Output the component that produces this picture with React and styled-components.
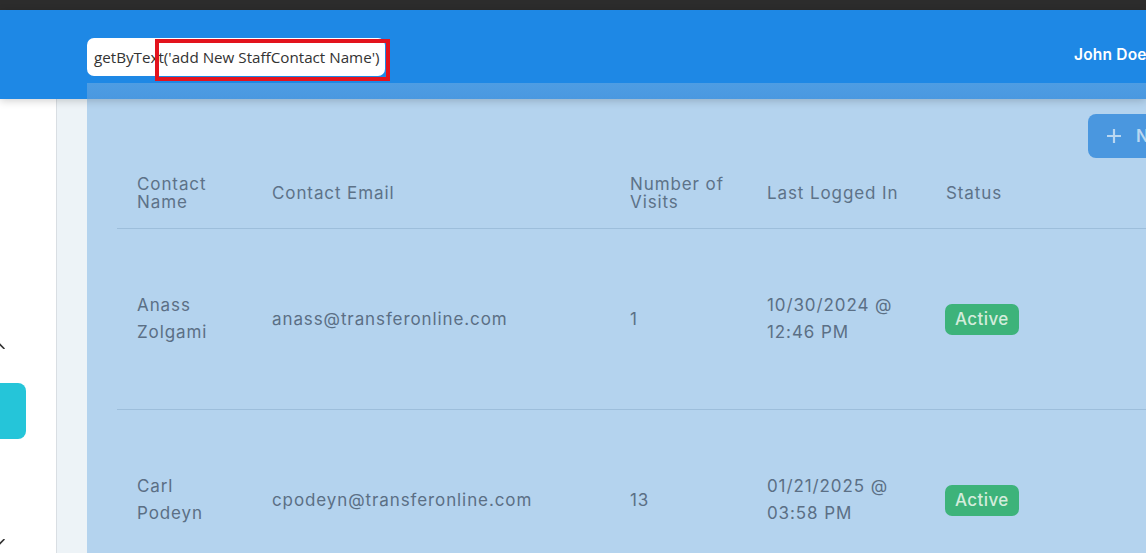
import React from 'react';
import styled, { createGlobalStyle } from 'styled-components';

const GlobalStyle = createGlobalStyle`
  html, body {
    margin: 0;
    padding: 0;
    overflow: hidden;
    background: #ffffff;
  }
  body {
    font-family: Inter, "Noto Sans", sans-serif;
  }
`;

const Page = styled.div`
  position: relative;
  width: 100vw;
  height: 100vh;
  overflow: hidden;
  display: flex;
  flex-direction: column;
`;

const TopStrip = styled.div`
  height: 10px;
  background: #2c2c2c;
  flex-shrink: 0;
`;

const Header = styled.header`
  position: relative;
  z-index: 2;
  height: 89px;
  flex-shrink: 0;
  background: #1e88e5;
  box-shadow: 0 2px 8px rgba(0, 0, 0, 0.18);
  display: grid;
  grid-template-columns: 1fr 72px;
  align-items: center;
`;

const UserName = styled.div`
  color: #ffffff;
  font-family: Inter, sans-serif;
  font-weight: 600;
  font-size: 15.5px;
  letter-spacing: 0.2px;
  white-space: nowrap;
`;

const Body = styled.div`
  flex: 1;
  display: flex;
  min-height: 0;
`;

const Sidebar = styled.aside`
  width: 56px;
  flex-shrink: 0;
  background: #ffffff;
  border-right: 1px solid #d9dee3;
  display: flex;
  flex-direction: column;
  align-items: flex-start;
  padding-top: 242px;
  overflow: hidden;
`;

const Chevron = styled.svg`
  margin-left: -9px;
  margin-top: ${p => p.$gap || 0}px;
  flex-shrink: 0;
`;

const TealButton = styled.div`
  width: 40px;
  height: 56px;
  margin-left: -14px;
  margin-top: 34px;
  border-radius: 8px;
  background: #25c5d9;
`;

const Main = styled.main`
  flex: 1;
  background: #edf3f7;
  padding-left: 30px;
  display: flex;
  min-width: 0;
`;

const Card = styled.section`
  position: relative;
  width: 1200px;
  flex-shrink: 0;
  background: #b4d3ee;
  padding: 15px 30px 0 30px;
  box-sizing: border-box;

  &::before {
    content: '';
    position: absolute;
    left: 0;
    right: 0;
    top: -16px;
    height: 16px;
    z-index: 3;
    background: linear-gradient(#4e9de3, #4a98e0);
  }
`;

const Toolbar = styled.div`
  display: flex;
  justify-content: flex-end;
`;

const NewButton = styled.button`
  height: 44px;
  width: 169px;
  flex-shrink: 0;
  border: none;
  border-radius: 8px;
  background: #4a97df;
  color: #b9d7f1;
  font-family: Inter, sans-serif;
  font-weight: 600;
  font-size: 17px;
  white-space: nowrap;
  display: flex;
  align-items: center;
  gap: 14px;
  padding: 0 0 0 18px;
  box-sizing: border-box;
  overflow: hidden;

  svg {
    flex-shrink: 0;
  }
`;

const Table = styled.table`
  width: 100%;
  border-collapse: collapse;
  table-layout: fixed;
  font-family: Inter, sans-serif;
  letter-spacing: 0.9px;
  color: #5b6f85;
`;

const HeadCell = styled.th`
  text-align: left;
  font-weight: 400;
  font-size: 17px;
  line-height: 18px;
  height: 70px;
  padding: 0 6px 0 20px;
  vertical-align: middle;
  border-bottom: 1px solid #9dbedb;
  color: #5d7288;
`;

const Cell = styled.td`
  font-size: 17px;
  line-height: 27px;
  height: 180px;
  padding: 0 6px 0 20px;
  vertical-align: middle;
  border-bottom: 1px solid #9dbedb;
  white-space: nowrap;
`;

const Badge = styled.span`
  display: inline-block;
  padding: 2px 10px 3px;
  border-radius: 7px;
  background: #3db37a;
  color: #d4ecdc;
  font-weight: 500;
  font-size: 17px;
  letter-spacing: 0.4px;
  line-height: 26px;
  margin-left: -1px;
`;

const Tooltip = styled.div`
  position: absolute;
  left: 87px;
  top: 38px;
  z-index: 10;
  height: 38px;
  width: 298px;
  box-sizing: border-box;
  background: #ffffff;
  border-radius: 7px;
  padding-left: 7px;
  display: flex;
  align-items: center;
  font-family: "Open Sans", sans-serif;
  font-size: 15.2px;
  color: #333333;
  white-space: nowrap;
`;

const Highlight = styled.div`
  position: absolute;
  left: 68px;
  top: 1px;
  width: 235px;
  height: 42px;
  box-sizing: border-box;
  border: 4px solid #e3131d;
`;

const columns = [135, 358, 137, 179, null];

const rows = [
  { first: 'Anass', last: 'Zolgami', email: 'anass@transferonline.com', visits: 1, date: '10/30/2024 @', time: '12:46 PM' },
  { first: 'Carl', last: 'Podeyn', email: 'cpodeyn@transferonline.com', visits: 13, date: '01/21/2025 @', time: '03:58 PM' },
];

const ChevronIcon = ({ up, gap }) => (
  <Chevron $gap={gap} width="14" height="8" viewBox="0 0 14 8" fill="none">
    <path
      d={up ? 'M1 7.5 L7 1.5 L13 7.5' : 'M1 0.5 L7 6.5 L13 0.5'}
      stroke="#333"
      strokeWidth="1.6"
      strokeLinecap="round"
      strokeLinejoin="round"
    />
  </Chevron>
);

const App = () => (
  <Page>
    <GlobalStyle />
    <TopStrip />
    <Header>
      <div />
      <UserName>John Doe</UserName>
    </Header>
    <Body>
      <Sidebar>
        <ChevronIcon up />
        <TealButton />
        <ChevronIcon gap={100} />
      </Sidebar>
      <Main>
        <Card>
          <Toolbar>
            <NewButton>
              <svg width="16" height="16" viewBox="0 0 16 16">
                <path d="M8 1v14M1 8h14" stroke="#b9d7f1" strokeWidth="2.2" />
              </svg>
              New Contact
            </NewButton>
          </Toolbar>
          <Table>
            <colgroup>
              {columns.map((w, i) => <col key={i} style={w ? { width: w } : undefined} />)}
            </colgroup>
            <thead>
              <tr>
                <HeadCell>Contact<br />Name</HeadCell>
                <HeadCell>Contact Email</HeadCell>
                <HeadCell>Number of<br />Visits</HeadCell>
                <HeadCell>Last Logged In</HeadCell>
                <HeadCell>Status</HeadCell>
              </tr>
            </thead>
            <tbody>
              {rows.map(r => (
                <tr key={r.email}>
                  <Cell>{r.first}<br />{r.last}</Cell>
                  <Cell>{r.email}</Cell>
                  <Cell>{r.visits}</Cell>
                  <Cell>{r.date}<br />{r.time}</Cell>
                  <Cell><Badge>Active</Badge></Cell>
                </tr>
              ))}
            </tbody>
          </Table>
        </Card>
      </Main>
    </Body>
    <Tooltip>
      getByText('add New StaffContact Name')
      <Highlight />
    </Tooltip>
  </Page>
);

export default App;
